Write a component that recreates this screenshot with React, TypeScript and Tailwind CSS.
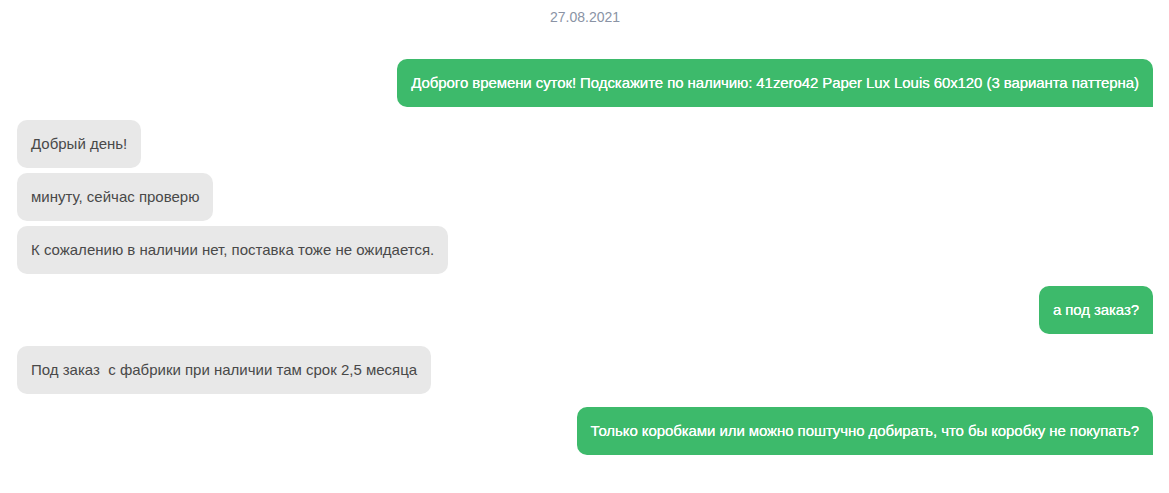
import React from "react";

type Msg = { out: boolean; text: string; gap: string };

const msgs: Msg[] = [
  { out: true, text: "Доброго времени суток! Подскажите по наличию: 41zero42 Paper Lux Louis 60x120 (3 варианта паттерна)", gap: "mt-0" },
  { out: false, text: "Добрый день!", gap: "mt-[13px]" },
  { out: false, text: "минуту, сейчас проверю", gap: "mt-[5px]" },
  { out: false, text: "К сожалению в наличии нет, поставка тоже не ожидается.", gap: "mt-[5px]" },
  { out: true, text: "а под заказ?", gap: "mt-[12px]" },
  { out: false, text: "Под заказ\u00a0 с фабрики при наличии там срок 2,5 месяца", gap: "mt-[12px]" },
  { out: true, text: "Только коробками или можно поштучно добирать, что бы коробку не покупать?", gap: "mt-[13px]" },
];

export default function App() {
  return (
    <div
      className="w-full min-h-[493px] bg-white px-[16px] pt-[9px] pb-[38px] flex flex-col"
      style={{ fontFamily: '"Liberation Sans", Arial, sans-serif' }}
    >
      <div className="text-center text-[14px] leading-[16px] text-[#8a93a5] pl-[1px]">27.08.2021</div>
      <div className="flex flex-col mt-[34px]">
        {msgs.map((m, i) => (
          <div key={i} className={`flex ${m.out ? "justify-end" : "justify-start pl-[1px]"} ${m.gap}`}>
            {m.out ? (
              <div className="bg-[#3dba6b] text-white text-[15px] leading-[20px] tracking-[-0.08px] px-[14px] py-[14px] rounded-[10px] rounded-br-none whitespace-pre [text-shadow:0_0_0.4px_#fff]">
                {m.text}
              </div>
            ) : (
              <div className="bg-[#e8e8e8] text-[#494949] text-[15px] leading-[20px] px-[14px] py-[14px] rounded-[10px] whitespace-pre">
                {m.text}
              </div>
            )}
          </div>
        ))}
      </div>
    </div>
  );
}
